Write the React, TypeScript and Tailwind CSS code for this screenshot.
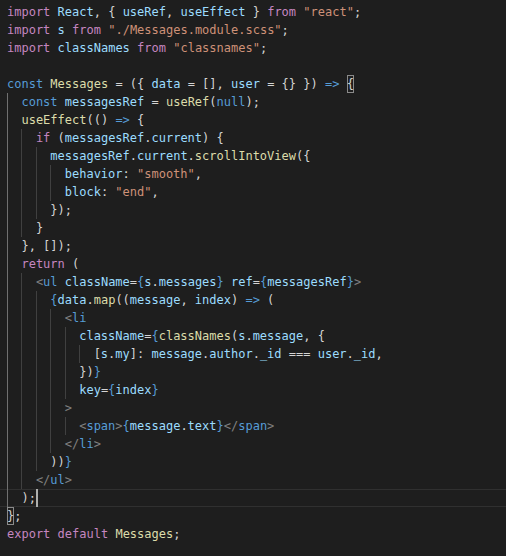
import type { FC, ReactElement } from "react";

type Tok = [string, string];
type Line = { indent: number; toks: Tok[]; current?: boolean };

const colors: Record<string, string> = {
  k: "text-[#c586c0]",
  b: "text-[#569cd6]",
  v: "text-[#9cdcfe]",
  f: "text-[#dcdcaa]",
  s: "text-[#ce9178]",
  p: "text-[#d4d4d4]",
  t: "text-[#808080]",
};

const lines: Line[] = [
  { indent: 0, toks: [["k", "import"], ["p", " "], ["v", "React"], ["p", ", { "], ["v", "useRef"], ["p", ", "], ["v", "useEffect"], ["p", " } "], ["k", "from"], ["p", " "], ["s", "\"react\""], ["p", ";"]] },
  { indent: 0, toks: [["k", "import"], ["p", " "], ["v", "s"], ["p", " "], ["k", "from"], ["p", " "], ["s", "\"./Messages.module.scss\""], ["p", ";"]] },
  { indent: 0, toks: [["k", "import"], ["p", " "], ["v", "classNames"], ["p", " "], ["k", "from"], ["p", " "], ["s", "\"classnames\""], ["p", ";"]] },
  { indent: 0, toks: [] },
  { indent: 0, toks: [["b", "const"], ["p", " "], ["f", "Messages"], ["p", " = ({ "], ["v", "data"], ["p", " = [], "], ["v", "user"], ["p", " = {} }) "], ["b", "=>"], ["p", " "], ["box", "{"]] },
  { indent: 1, toks: [["b", "const"], ["p", " "], ["v", "messagesRef"], ["p", " = "], ["f", "useRef"], ["p", "("], ["b", "null"], ["p", ");"]] },
  { indent: 1, toks: [["f", "useEffect"], ["p", "(() "], ["b", "=>"], ["p", " {"]] },
  { indent: 2, toks: [["k", "if"], ["p", " ("], ["v", "messagesRef"], ["p", "."], ["v", "current"], ["p", ") {"]] },
  { indent: 3, toks: [["v", "messagesRef"], ["p", "."], ["v", "current"], ["p", "."], ["f", "scrollIntoView"], ["p", "({"]] },
  { indent: 4, toks: [["v", "behavior"], ["p", ": "], ["s", "\"smooth\""], ["p", ","]] },
  { indent: 4, toks: [["v", "block"], ["p", ": "], ["s", "\"end\""], ["p", ","]] },
  { indent: 3, toks: [["p", "});"]] },
  { indent: 2, toks: [["p", "}"]] },
  { indent: 1, toks: [["p", "}, []);"]] },
  { indent: 1, toks: [["k", "return"], ["p", " ("]] },
  { indent: 2, toks: [["t", "<"], ["b", "ul"], ["p", " "], ["v", "className"], ["p", "="], ["b", "{"], ["v", "s"], ["p", "."], ["v", "messages"], ["b", "}"], ["p", " "], ["v", "ref"], ["p", "="], ["b", "{"], ["v", "messagesRef"], ["b", "}"], ["t", ">"]] },
  { indent: 3, toks: [["b", "{"], ["v", "data"], ["p", "."], ["f", "map"], ["p", "(("], ["v", "message"], ["p", ", "], ["v", "index"], ["p", ") "], ["b", "=>"], ["p", " ("]] },
  { indent: 4, toks: [["t", "<"], ["b", "li"]] },
  { indent: 5, toks: [["v", "className"], ["p", "="], ["b", "{"], ["f", "classNames"], ["p", "("], ["v", "s"], ["p", "."], ["v", "message"], ["p", ", {"]] },
  { indent: 6, toks: [["p", "["], ["v", "s"], ["p", "."], ["v", "my"], ["p", "]: "], ["v", "message"], ["p", "."], ["v", "author"], ["p", "."], ["v", "_id"], ["p", " === "], ["v", "user"], ["p", "."], ["v", "_id"], ["p", ","]] },
  { indent: 5, toks: [["p", "})"], ["b", "}"]] },
  { indent: 5, toks: [["v", "key"], ["p", "="], ["b", "{"], ["v", "index"], ["b", "}"]] },
  { indent: 4, toks: [["t", ">"]] },
  { indent: 5, toks: [["t", "<"], ["b", "span"], ["t", ">"], ["b", "{"], ["v", "message"], ["p", "."], ["v", "text"], ["b", "}"], ["t", "</"], ["b", "span"], ["t", ">"]] },
  { indent: 4, toks: [["t", "</"], ["b", "li"], ["t", ">"]] },
  { indent: 3, toks: [["p", "))"], ["b", "}"]] },
  { indent: 2, toks: [["t", "</"], ["b", "ul"], ["t", ">"]] },
  { indent: 1, toks: [["p", ");"], ["cursor", ""]], current: true },
  { indent: 0, toks: [["box", "}"], ["p", ";"]] },
  { indent: 0, toks: [["k", "export"], ["p", " "], ["k", "default"], ["p", " "], ["f", "Messages"], ["p", ";"]] },
];

const CodeLine: FC<{ line: Line }> = ({ line }): ReactElement => (
  <div
    className={`h-[18px] flex items-start pl-[7px] ${
      line.current ? "shadow-[inset_0_1px_0_#303030,inset_0_-1px_0_#303030]" : ""
    }`}
  >
    {Array.from({ length: line.indent }).map((_, i) => (
      <span
        key={i}
        className={`inline-block w-[2ch] h-[18px] border-l ${
          i === 0 ? "border-[#707070]" : "border-[#404040]"
        }`}
      />
    ))}
    {line.toks.map(([c, text], i) => {
      if (c === "cursor") {
        return <span key={i} className="inline-block w-[2px] h-[18px] bg-[#aeafad]" />;
      }
      if (c === "box") {
        return (
          <span
            key={i}
            className="inline-block h-[18px] text-[#d4d4d4] shadow-[inset_0_0_0_1px_#8a8a8a]"
          >
            {text}
          </span>
        );
      }
      return (
        <span key={i} className={colors[c]}>
          {text}
        </span>
      );
    })}
  </div>
);

export default function App(): ReactElement {
  return (
    <div className="w-[506px] h-[556px] overflow-hidden bg-[#1e1e1e] pt-[3px] whitespace-pre font-['DejaVu_Sans_Mono',monospace] text-[12px] leading-[18px]">
      {lines.map((line, i) => (
        <CodeLine key={i} line={line} />
      ))}
    </div>
  );
}
